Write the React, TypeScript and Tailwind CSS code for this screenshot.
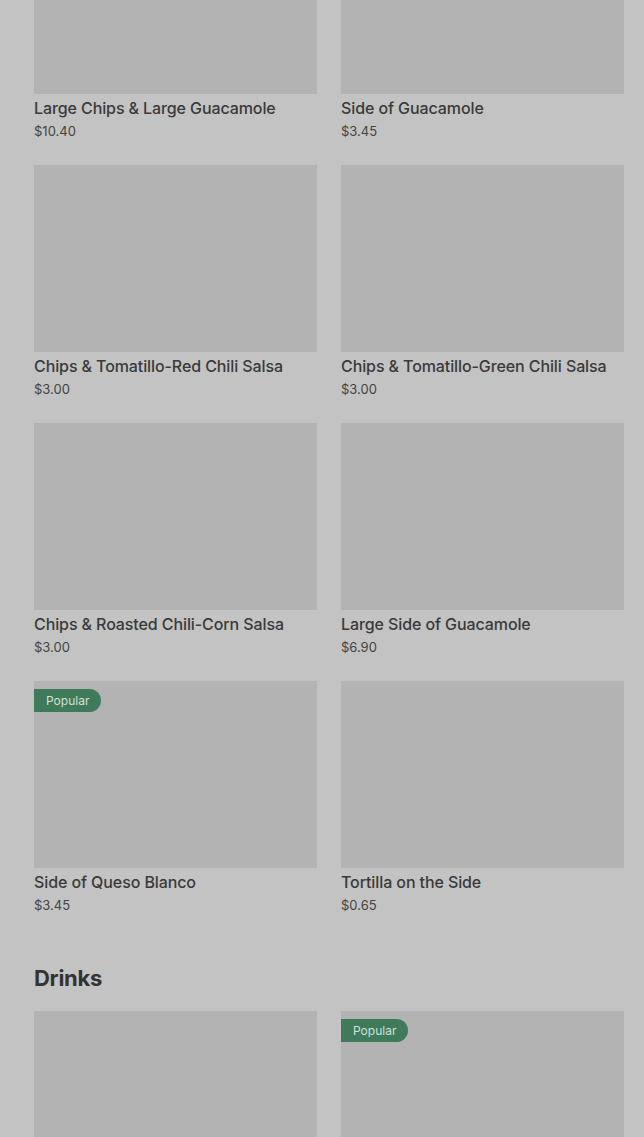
const sides = [
  { name: "Large Chips & Large Guacamole", price: "$10.40" },
  { name: "Side of Guacamole", price: "$3.45" },
  { name: "Chips & Tomatillo-Red Chili Salsa", price: "$3.00" },
  { name: "Chips & Tomatillo-Green Chili Salsa", price: "$3.00" },
  { name: "Chips & Roasted Chili-Corn Salsa", price: "$3.00" },
  { name: "Large Side of Guacamole", price: "$6.90" },
  { name: "Side of Queso Blanco", price: "$3.45", popular: true },
  { name: "Tortilla on the Side", price: "$0.65" },
];

const drinks = [
  { name: "", price: "" },
  { name: "", price: "", popular: true },
];

type Item = { name: string; price: string; popular?: boolean };

const MenuCard = ({ item }: { item: Item }) => (
  <div className="flex flex-col">
    <div className="relative h-[187px] bg-[#b3b3b3]">
      {item.popular && (
        <span className="absolute left-0 top-[8px] h-[23px] pl-[12px] pr-[12px] rounded-r-full bg-[#3f7b5a] text-[#cfe0d6] text-[12px] leading-[23px]">
          Popular
        </span>
      )}
    </div>
    {item.name && (
      <div className="pt-[4px] pb-[24px]">
        <p className="text-[16px] leading-[20px] font-medium tracking-[-0.1px] text-[#3a3a3a]">{item.name}</p>
        <p className="mt-[3px] text-[13px] leading-[20px] text-[#444444]">{item.price}</p>
      </div>
    )}
  </div>
);

export default function App() {
  return (
    <div
      className="min-h-[1137px] bg-[#c3c3c3] pl-[34px] pr-[20px] overflow-hidden"
      style={{ fontFamily: "Inter, 'Liberation Sans', sans-serif" }}
    >
      <div className="-mt-[93px] grid grid-cols-2 gap-x-[24px]">
        {sides.map((item) => (
          <MenuCard key={item.name} item={item} />
        ))}
      </div>

      <h2 className="mt-[24px] text-[22px] leading-[30px] font-bold tracking-[-0.3px] text-[#333333]">
        Drinks
      </h2>

      <div className="mt-[18px] grid grid-cols-2 gap-x-[24px]">
        {drinks.map((item, i) => (
          <MenuCard key={i} item={item} />
        ))}
      </div>
    </div>
  );
}
